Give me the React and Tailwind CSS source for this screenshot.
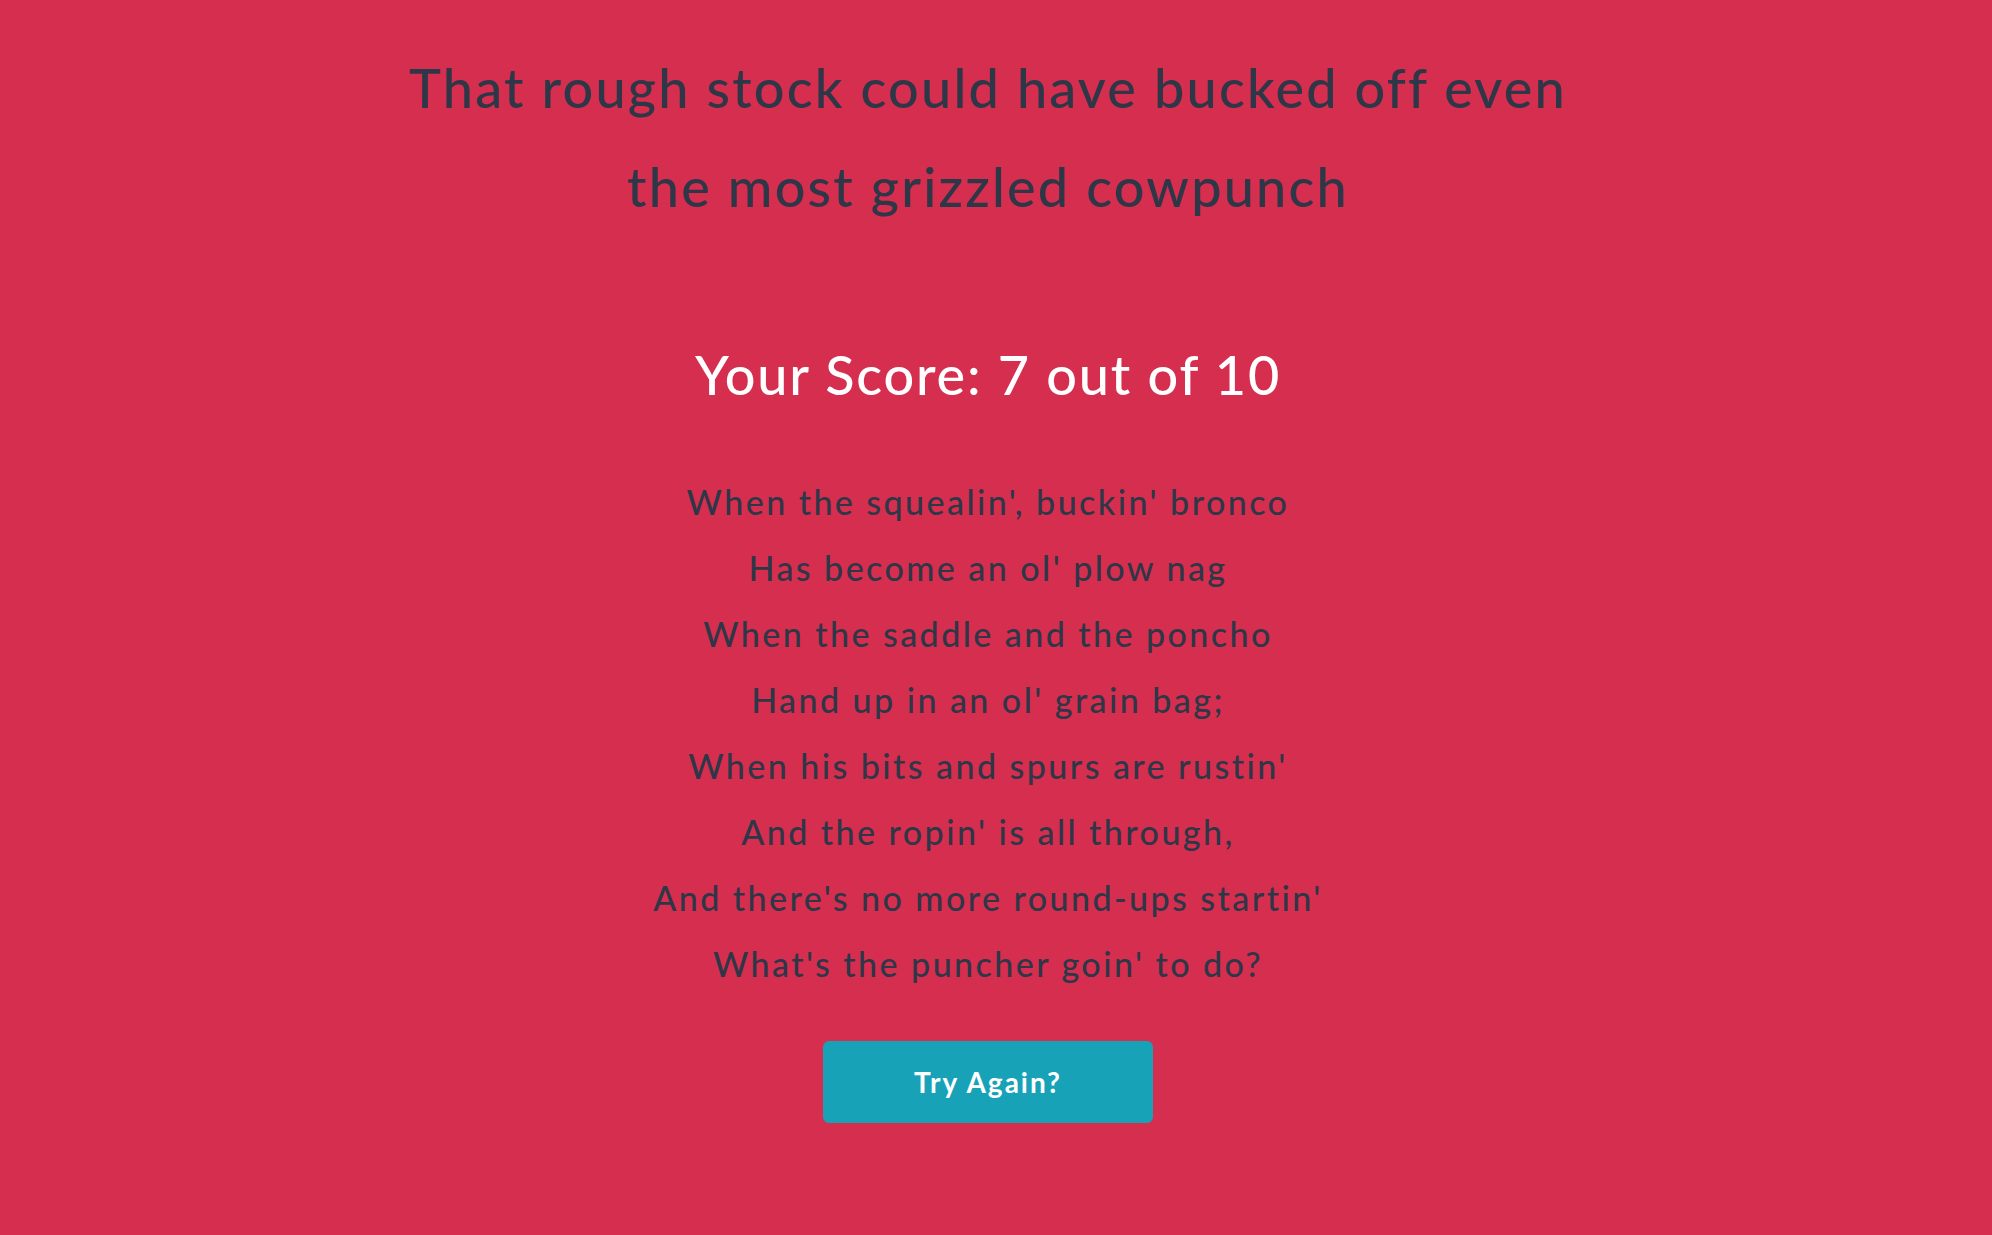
export default function App() {
  const lines = [
    "When the squealin', buckin' bronco",
    "Has become an ol' plow nag",
    "When the saddle and the poncho",
    "Hand up in an ol' grain bag;",
    "When his bits and spurs are rustin'",
    "And the ropin' is all through,",
    "And there's no more round-ups startin'",
    "What's the puncher goin' to do?",
  ];
  return (
    <div
      className="min-h-screen w-full bg-[#d62e4e] pr-[16px] flex flex-col items-center text-center"
      style={{ fontFamily: "Lato, 'Open Sans', sans-serif" }}
    >
      <h1 className="mt-[38px] text-[54px] leading-[99px] font-medium text-[#2d3748] tracking-[2.2px]">
        That rough stock could have bucked off even
        <br />
        the most grizzled cowpunch
      </h1>
      <h2 className="mt-[108px] text-[54px] leading-[62px] font-medium text-white tracking-[1.8px]">
        Your Score: 7 out of 10
      </h2>
      <div className="mt-[63px] flex flex-col text-[34px] leading-[66px] font-medium text-[#2d3748] tracking-[2.45px]">
        {lines.map((l) => (
          <p key={l}>{l}</p>
        ))}
      </div>
      <button className="mt-[44px] w-[330px] h-[82px] rounded-[6px] bg-[#17a2b8] text-white text-[28px] font-bold tracking-[2px]">
        Try Again?
      </button>
    </div>
  );
}
